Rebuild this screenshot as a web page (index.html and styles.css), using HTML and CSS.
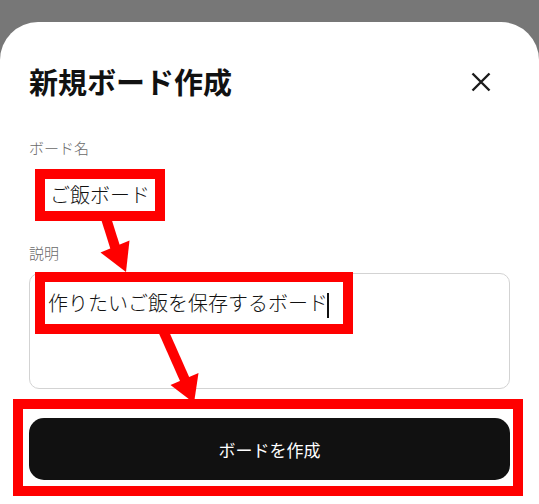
FILE: index.html
```html
<!DOCTYPE html>
<html lang="ja">
<head>
<meta charset="UTF-8">
<meta name="viewport" content="width=device-width, initial-scale=1.0">
<title>新規ボード作成</title>
<link rel="stylesheet" href="styles.css">
</head>
<body>
    <div class="sheet">
        <header class="sheet-head">
            <h1 class="sheet-title">新規ボード作成</h1>
            <button class="close-btn" aria-label="閉じる">
                <svg width="20" height="20" viewBox="0 0 20 20">
                    <path d="M1.5 1.5 L18.5 18.5 M18.5 1.5 L1.5 18.5" stroke="#1a1a1a" stroke-width="2.4" fill="none"/>
                </svg>
            </button>
        </header>

        <!-- ボード名 -->
        <div class="field-label">ボード名</div>
        <div class="name-field">
            <span class="mark name-mark">ご飯ボード</span>
        </div>

        <!-- 説明 -->
        <div class="field-label desc-label">説明</div>
        <div class="desc-box">
            <span class="mark desc-mark">作りたいご飯を保存するボード<span class="caret"></span></span>
        </div>

        <div class="mark submit-mark">
            <button class="submit-btn">ボードを作成</button>
        </div>
    </div>

    <!-- 注釈の矢印 -->
    <svg class="arrows" width="539" height="504" viewBox="0 0 539 504">
        <line x1="105" y1="215" x2="116" y2="250" stroke="#ff0000" stroke-width="10"/>
        <polygon points="100.5,252.5 129.5,240.5 126,272" fill="#ff0000"/>
        <line x1="162" y1="328" x2="185" y2="380" stroke="#ff0000" stroke-width="10"/>
        <polygon points="170.5,385 198.5,373 194,403" fill="#ff0000"/>
    </svg>
</body>
</html>
```

FILE: styles.css
```css
html, body {
    margin: 0;
    padding: 0;
    height: 100%;
}
body {
    position: relative;
    background-color: #777777;
    font-family: "Noto Sans CJK JP", "Noto Sans", sans-serif;
    color: #111;
    overflow: hidden;
}
.sheet {
    margin-top: 22px;
    min-height: 482px;
    padding: 38px 29px 0;
    background: #fff;
    border-radius: 38px 38px 0 0;
    box-sizing: border-box;
}
.sheet-head {
    display: flex;
    justify-content: space-between;
    align-items: center;
    height: 42px;
}
.sheet-title {
    margin: 0;
    font-size: 29px;
    line-height: 42px;
    font-weight: 700;
    color: #111;
}
.close-btn {
    display: flex;
    padding: 0;
    margin: 2px 19px 0 0;
    border: none;
    background: none;
    cursor: pointer;
}
.field-label {
    margin-top: 36px;
    font-size: 15px;
    line-height: 20px;
    font-weight: 300;
    color: #6a6a6a;
}
.desc-label {
    margin-top: 22px;
}
.mark {
    border: 10px solid #ff0000;
    background: #fff;
}
.name-field {
    margin: 11px 0 0 6px;
}
.name-mark {
    display: inline-block;
    padding: 0 5px;
    font-size: 20px;
    line-height: 32px;
    font-weight: 300;
    color: #111;
}
.desc-box {
    margin-top: 10px;
    height: 116px;
    border: 1px solid #d3d3d3;
    border-radius: 10px;
    box-sizing: border-box;
}
.desc-mark {
    display: inline-block;
    margin: -2px 0 0 5px;
    padding: 0 14px 0 3px;
    font-size: 20px;
    line-height: 42px;
    font-weight: 300;
    color: #111;
}
.caret {
    display: inline-block;
    width: 2px;
    height: 25px;
    margin-left: -1px;
    vertical-align: middle;
    background: #111;
}
.submit-mark {
    margin: 10px -13px 0 -16px;
    padding: 9px 3px 6px 6px;
}
.submit-btn {
    display: block;
    width: 100%;
    height: 62px;
    border: none;
    border-radius: 15px;
    background: #111;
    color: #fff;
    font-family: "Noto Sans CJK JP", "Noto Sans", sans-serif;
    font-size: 17px;
    font-weight: 400;
    cursor: pointer;
}
.arrows {
    position: absolute;
    top: 0;
    left: 0;
    pointer-events: none;
}
```
